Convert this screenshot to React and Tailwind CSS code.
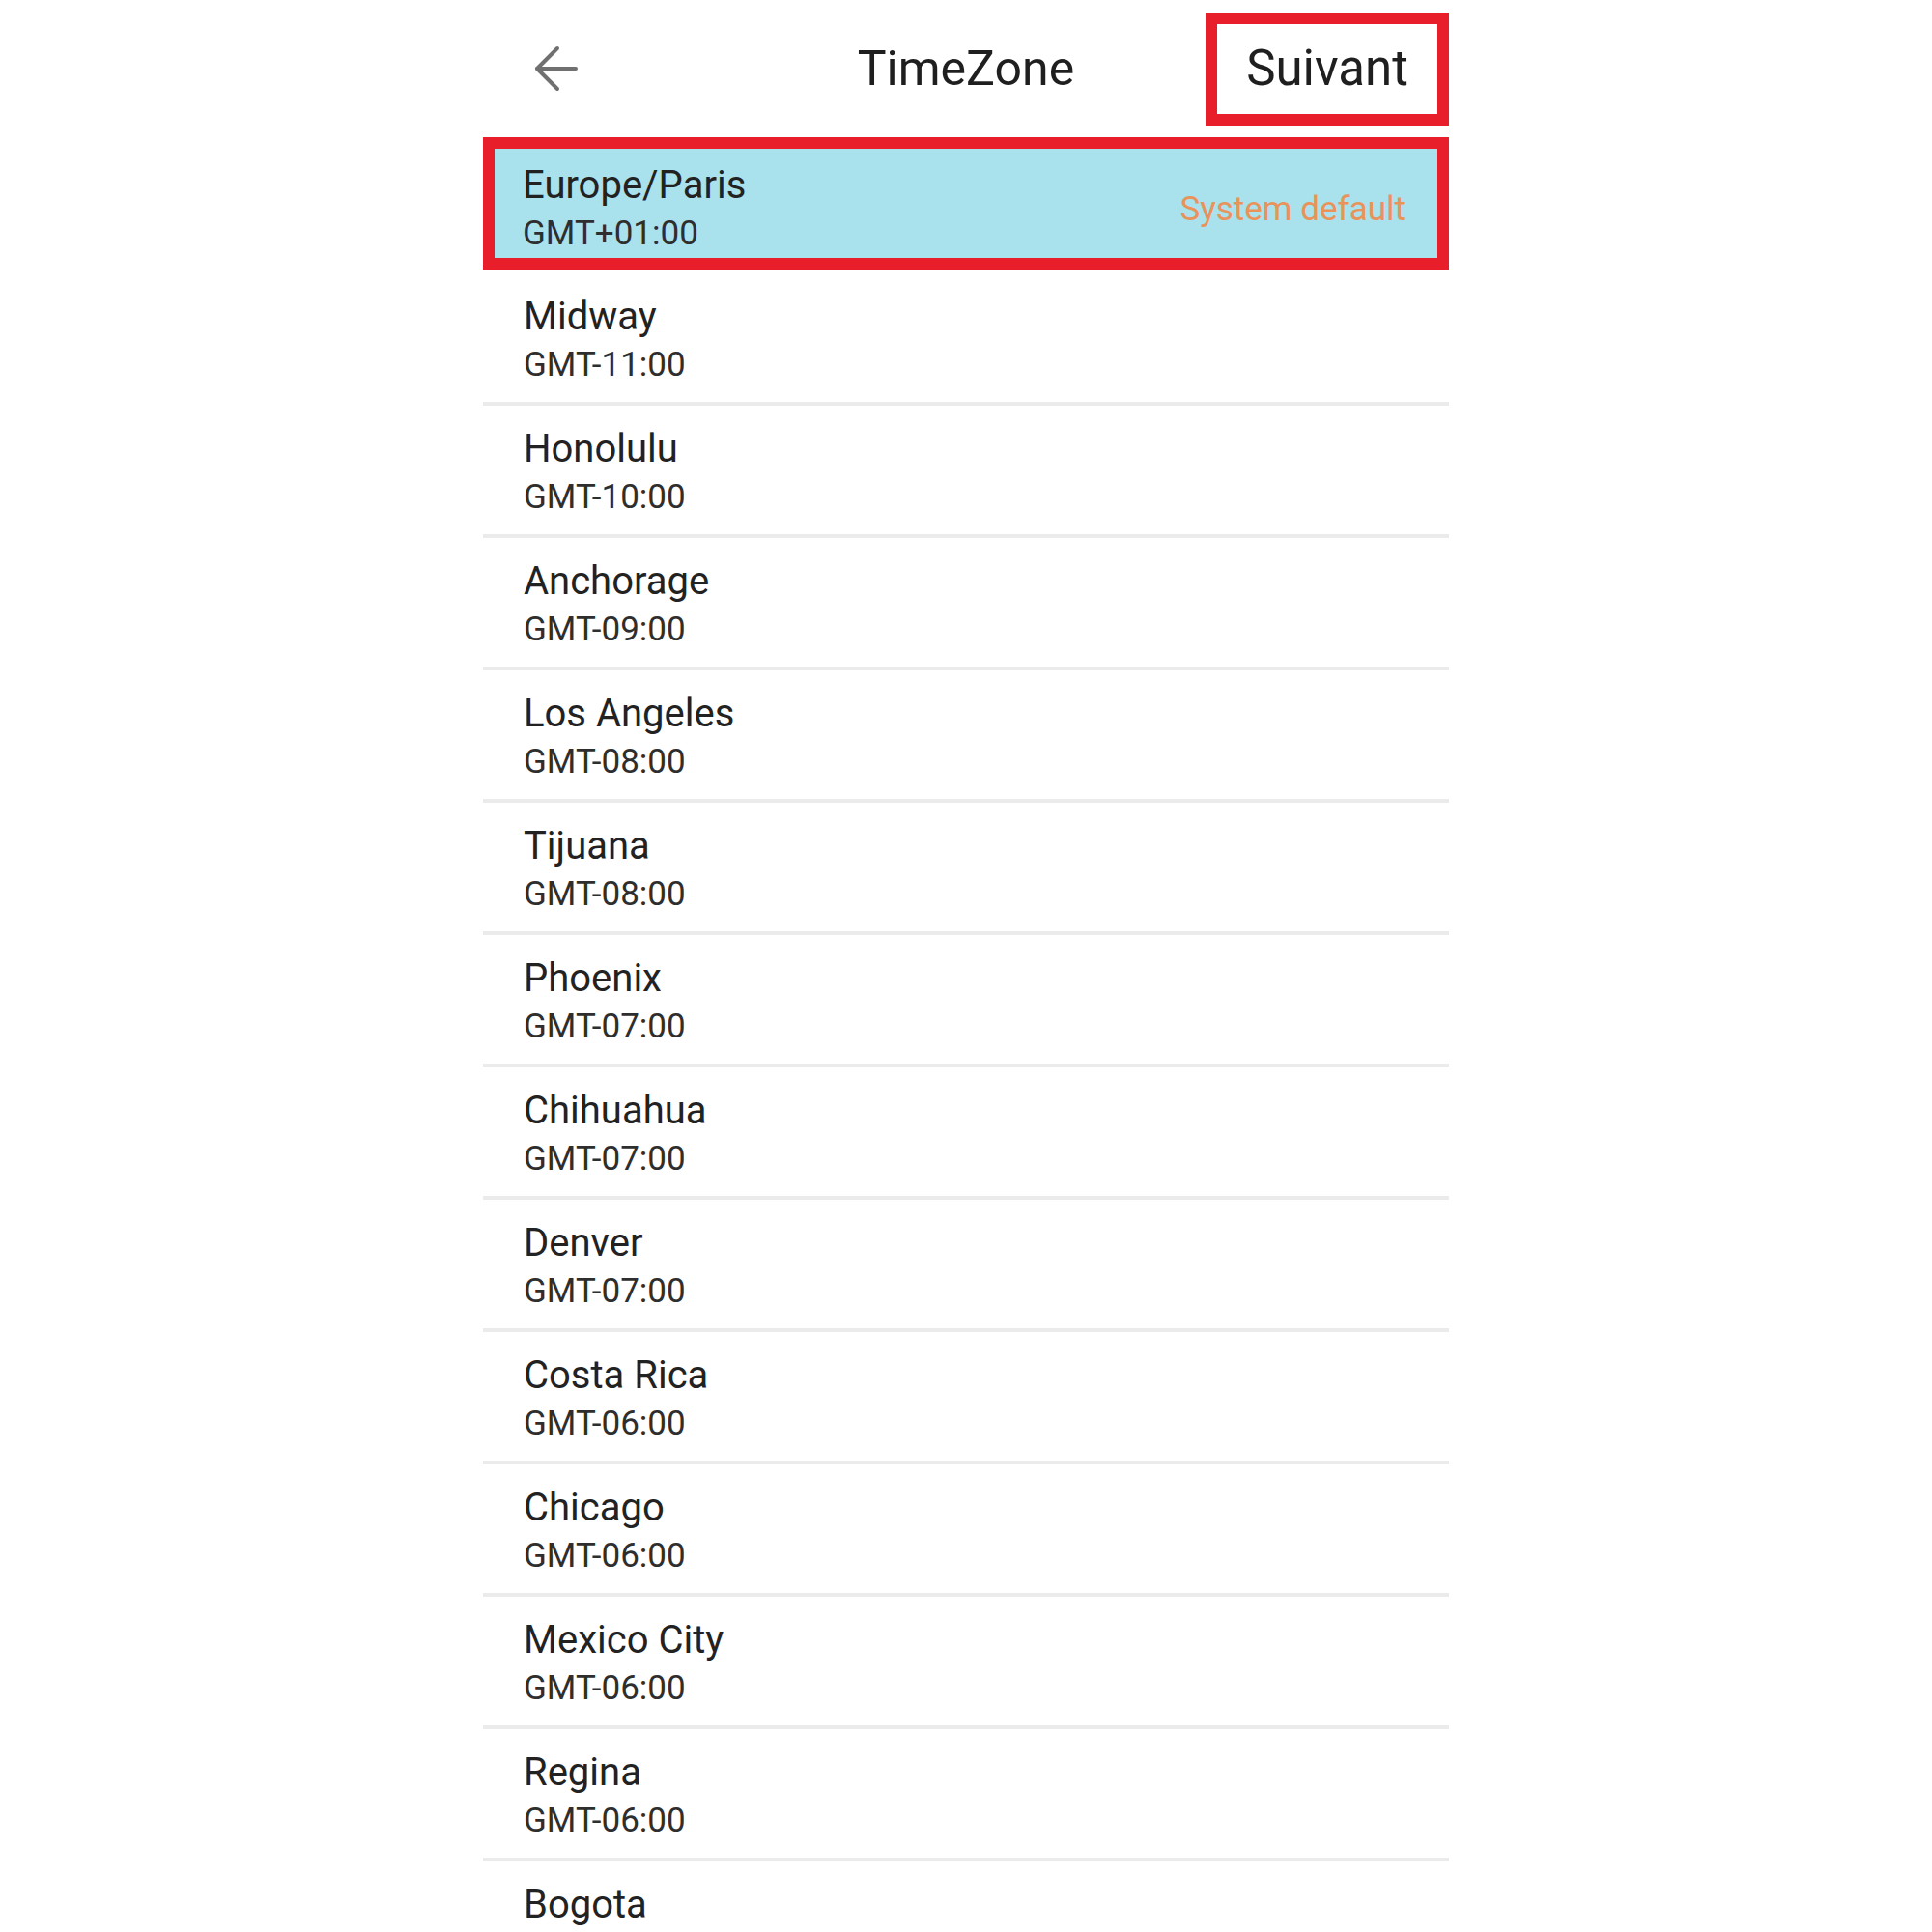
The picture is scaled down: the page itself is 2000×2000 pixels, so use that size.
import React from 'react';

const zones = [
    { name: 'Midway', offset: 'GMT-11:00' },
    { name: 'Honolulu', offset: 'GMT-10:00' },
    { name: 'Anchorage', offset: 'GMT-09:00' },
    { name: 'Los Angeles', offset: 'GMT-08:00' },
    { name: 'Tijuana', offset: 'GMT-08:00' },
    { name: 'Phoenix', offset: 'GMT-07:00' },
    { name: 'Chihuahua', offset: 'GMT-07:00' },
    { name: 'Denver', offset: 'GMT-07:00' },
    { name: 'Costa Rica', offset: 'GMT-06:00' },
    { name: 'Chicago', offset: 'GMT-06:00' },
    { name: 'Mexico City', offset: 'GMT-06:00' },
    { name: 'Regina', offset: 'GMT-06:00' },
    { name: 'Bogota', offset: 'GMT-05:00' },
];

const BackArrow = () => (
    <svg width="46" height="48" viewBox="0 0 46 48" fill="none" stroke="#707070" strokeWidth="4" strokeLinecap="round" strokeLinejoin="round">
        <path d="M44 24H4" />
        <path d="M25 3L4 24l21 21" />
    </svg>
);

const App = () => {
    return (
        <div className="h-[2000px] overflow-hidden bg-white font-['Roboto',sans-serif] text-[#222]">
            <div className="w-[1000px] mx-auto">
                {/* header */}
                <div className="grid grid-cols-3 items-center h-[142px]">
                    <div className="pl-[52px] flex items-center">
                        <BackArrow />
                    </div>
                    <h1 className="text-center text-[50px] leading-none font-normal text-[#1f1f1f] whitespace-nowrap">TimeZone</h1>
                    <div className="flex justify-end">
                        <button className="w-[252px] h-[117px] border-[12px] border-[#e81f2a] flex items-center justify-center text-[51px] text-[#1f1f1f]">
                            Suivant
                        </button>
                    </div>
                </div>

                {/* selected zone */}
                <div className="h-[137px] border-[12px] border-[#e81f2a] bg-[#a9e1ec] flex justify-between pl-[29px] pr-[33px] pt-[13px] mb-1">
                    <div>
                        <p className="text-[40px] leading-[50px] text-[#222]">Europe/Paris</p>
                        <p className="text-[35px] leading-[50px] text-[#2e2e2e]">GMT+01:00</p>
                    </div>
                    <span className="self-center text-[35px] leading-[40px] text-[#e9935b]">System default</span>
                </div>

                {/* list */}
                <ul>
                    {zones.map((z) => (
                        <li key={z.name} className="h-[137px] pl-[42px] pt-[20px] border-b-4 border-[#ebebeb]">
                            <p className="text-[40px] leading-[50px] text-[#222]">{z.name}</p>
                            <p className="text-[35px] leading-[50px] text-[#2e2e2e]">{z.offset}</p>
                        </li>
                    ))}
                </ul>
            </div>
        </div>
    );
};

export default App;
